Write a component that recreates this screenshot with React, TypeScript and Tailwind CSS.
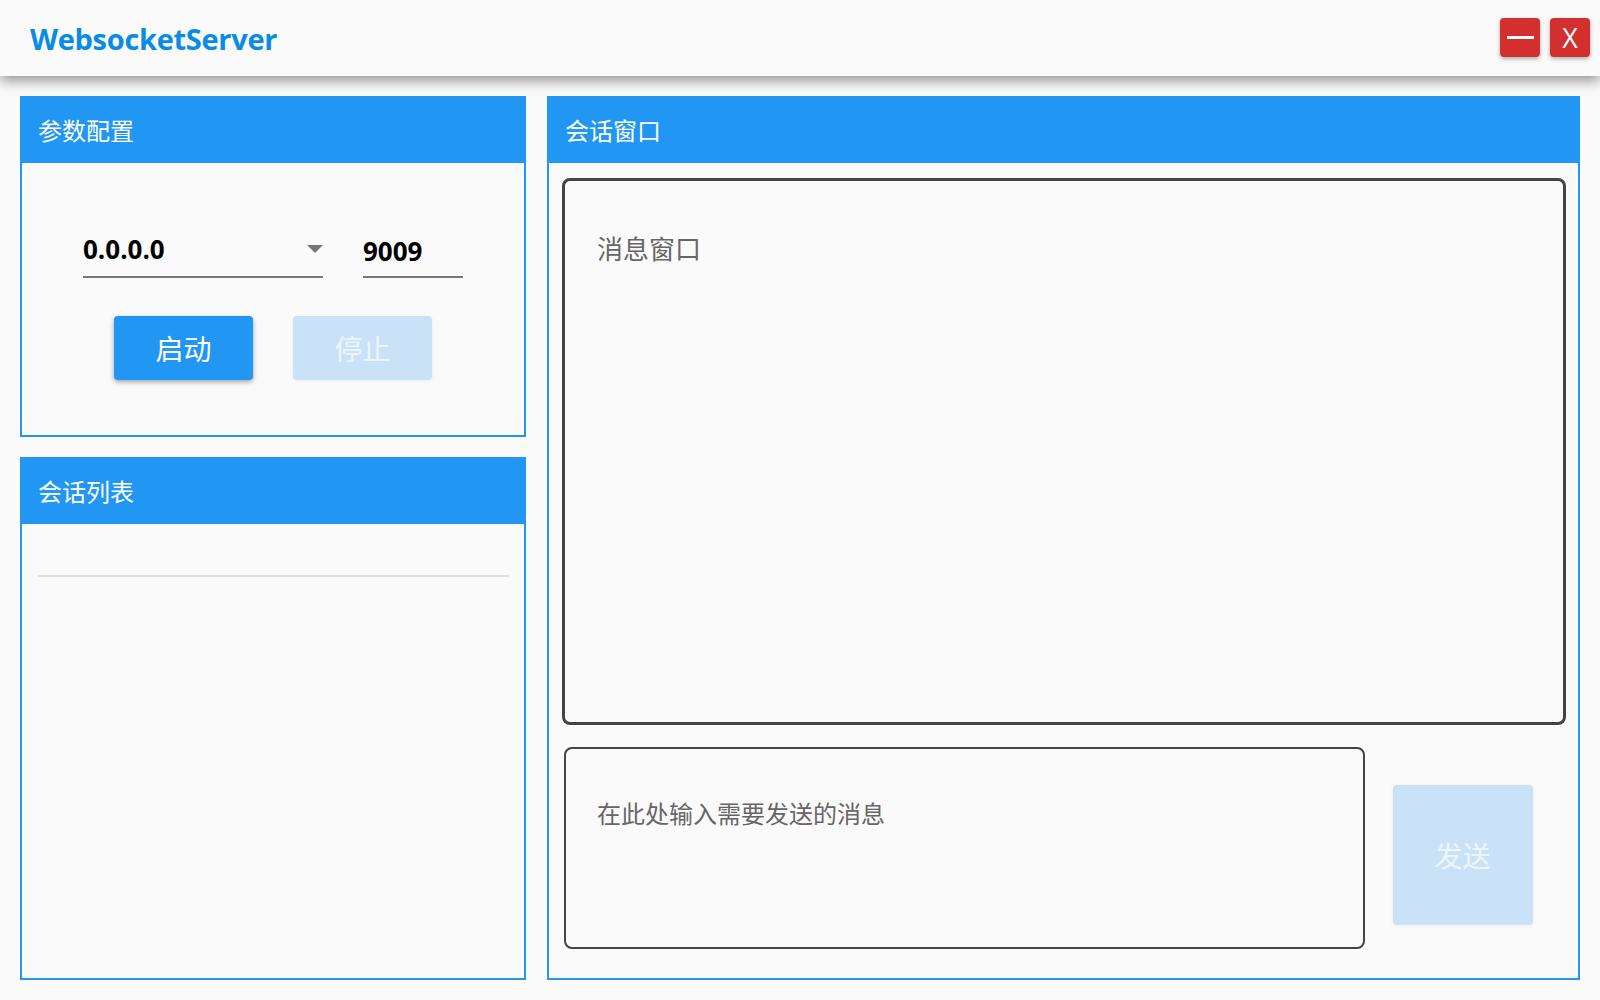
import React from "react";

const font = { fontFamily: '"Open Sans","Noto Sans CJK SC",sans-serif' };
const cjk = { fontFamily: '"Noto Sans CJK SC","Noto Sans",sans-serif' };

function PanelHeader({ title }: { title: string }) {
  return (
    <div className="h-[65px] bg-[#2196f3] flex items-center pl-4 pb-[1px] text-white text-[24px] leading-none shrink-0" style={cjk}>
      {title}
    </div>
  );
}

export default function App() {
  return (
    <div className="w-[1600px] h-[1000px] bg-[#fafafa] flex flex-col overflow-hidden" style={font}>
      {/* Title bar */}
      <div className="relative z-10 h-[76px] shrink-0 bg-[#fafafa] flex items-center justify-between pl-[30px] pr-[10px] shadow-[0_5px_12px_rgba(0,0,0,0.4)]">
        <div className="text-[#0a8ce4] font-bold text-[29px] tracking-[-0.3px] pt-[1px]" style={{ fontFamily: '"Open Sans",sans-serif' }}>
          WebsocketServer
        </div>
        <div className="flex gap-[10px] pb-[1px]">
          <button className="w-[40px] h-[39px] rounded-[4px] bg-[#d32f2f] flex items-center justify-center shadow-[0_2px_4px_rgba(0,0,0,0.3)]">
            <span className="block w-[27px] h-[3px] bg-white" />
          </button>
          <button className="w-[40px] h-[39px] rounded-[4px] bg-[#d32f2f] flex items-center justify-center text-white text-[27px] leading-none shadow-[0_2px_4px_rgba(0,0,0,0.3)]" style={{ fontFamily: '"Open Sans",sans-serif' }}>
            X
          </button>
        </div>
      </div>

      {/* Body */}
      <div className="flex-1 grid grid-cols-[506px_1fr] gap-[21px] px-5 pt-5 pb-5 min-h-0">
        {/* Left column */}
        <div className="flex flex-col gap-5 min-h-0">
          <div className="h-[341px] border-2 border-[#2196f3] flex flex-col">
            <PanelHeader title="参数配置" />
            <div className="flex flex-col items-center pt-[68px]">
              <div className="flex gap-10">
                <div className="w-[240px] h-[47px] border-b-2 border-[#777] flex items-center justify-between">
                  <span className="text-[26px] font-bold text-black leading-none -mt-[9px]">0.0.0.0</span>
                  <svg width="16" height="8" viewBox="0 0 16 8" className="-mt-[9px]">
                    <path d="M0 0 L16 0 L8 8 Z" fill="#777" />
                  </svg>
                </div>
                <div className="w-[100px] h-[47px] border-b-2 border-[#777] flex items-center">
                  <span className="text-[26px] font-bold text-black leading-none -mt-[6px]">9009</span>
                </div>
              </div>
              <div className="flex gap-10 mt-[38px]">
                <button className="w-[139px] h-[64px] rounded-[4px] bg-[#2196f3] text-white text-[28px] leading-none shadow-[0_2px_5px_rgba(0,0,0,0.35)]" style={cjk}>
                  启动
                </button>
                <button className="w-[139px] h-[64px] rounded-[4px] bg-[#c9e2f7] text-[#eef6fd] text-[28px] leading-none shadow-[0_1px_4px_rgba(0,0,0,0.06)]" style={cjk}>
                  停止
                </button>
              </div>
            </div>
          </div>
          <div className="flex-1 border-2 border-[#2196f3] flex flex-col min-h-0">
            <PanelHeader title="会话列表" />
            <div className="pl-4 pr-[15px] pt-[51px]">
              <div className="h-[2px] bg-[#e0e0e0]" />
            </div>
          </div>
        </div>

        {/* Right column */}
        <div className="border-2 border-[#2196f3] flex flex-col min-h-0">
          <PanelHeader title="会话窗口" />
          <div className="flex-1 flex flex-col pl-[13px] pr-[12px] pt-[15px] pb-[29px] gap-[22px] min-h-0">
            <div className="flex-1 border-[3px] border-[#444] rounded-[8px] pl-[32px] pt-[51px]">
              <div className="text-[26px] leading-[32px] text-[#666]" style={cjk}>消息窗口</div>
            </div>
            <div className="h-[202px] shrink-0 flex">
              <div className="w-[801px] h-full ml-[2px] border-2 border-[#444] rounded-[8px] pl-[31px] pt-[49px]">
                <div className="text-[24px] leading-[30px] text-[#666]" style={cjk}>在此处输入需要发送的消息</div>
              </div>
              <div className="flex-1 flex items-center justify-center pr-[6px] pt-[14px]">
                <button className="w-[140px] h-[140px] rounded-[4px] bg-[#c9e2f7] text-[#eef6fd] text-[28px] leading-none shadow-[0_1px_4px_rgba(0,0,0,0.06)]" style={cjk}>
                  发送
                </button>
              </div>
            </div>
          </div>
        </div>
      </div>
    </div>
  );
}
